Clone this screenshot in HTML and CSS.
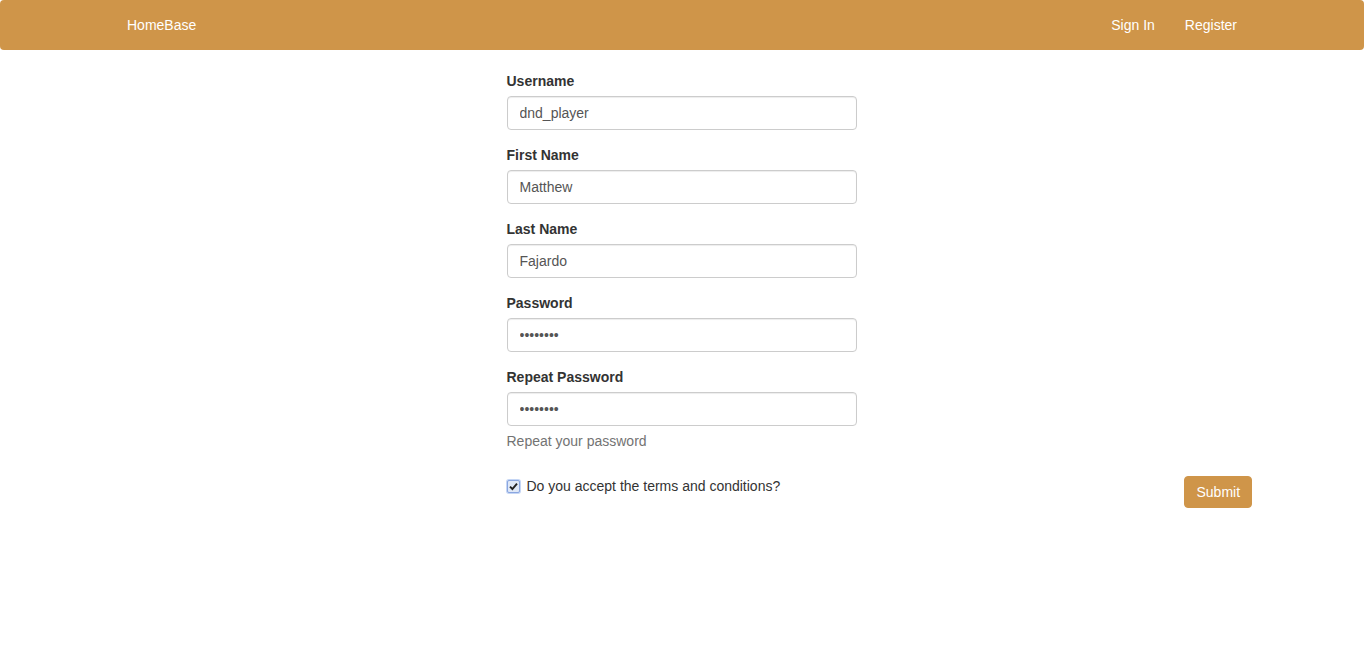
FILE: index.html
```html
<!DOCTYPE html>
<html>
<head>
<meta charset="utf-8">
<title>HomeBase</title>
<link rel="stylesheet" href="styles.css">
</head>
<body>
<nav class="navbar">
  <div class="container nav-inner">
    <a class="brand" href="#">HomeBase</a>
    <ul class="nav-links">
      <li><a href="#">Sign In</a></li>
      <li><a href="#">Register</a></li>
    </ul>
  </div>
</nav>
<div class="container">
  <form class="reg-form">
    <div class="form-col">
      <div class="form-group">
        <label>Username</label>
        <input class="form-control" type="text" value="dnd_player">
      </div>
      <div class="form-group">
        <label>First Name</label>
        <input class="form-control" type="text" value="Matthew">
      </div>
      <div class="form-group">
        <label>Last Name</label>
        <input class="form-control" type="text" value="Fajardo">
      </div>
      <div class="form-group">
        <label>Password</label>
        <input class="form-control" type="password" value="password">
      </div>
      <div class="form-group">
        <label>Repeat Password</label>
        <input class="form-control" type="password" value="password">
        <span class="help-block">Repeat your password</span>
      </div>
    </div>
    <div class="bottom-row">
      <label class="checkbox">
        <span class="check-box">
          <svg width="9" height="9" viewBox="0 0 9 9"><path d="M1 4.6 L3.4 7 L8 1.6" fill="none" stroke="#222" stroke-width="1.9"/></svg>
        </span>
        Do you accept the terms and conditions?
      </label>
      <button class="btn-submit" type="button">Submit</button>
    </div>
  </form>
</div>
</body>
</html>
```
FILE: styles.css
```css
* { box-sizing: border-box; }
html, body { margin: 0; padding: 0; }
body {
  font-family: "Liberation Sans", Arial, Helvetica, sans-serif;
  font-size: 14px;
  line-height: 20px;
  color: #333;
  background: #fff;
}
.container {
  width: 1170px;
  margin: 0 auto;
  padding: 0 15px;
}
.navbar {
  background: #cf9549;
  height: 50px;
  border-radius: 4px;
  margin-right: 1px;
  margin-bottom: 21px;
}
.nav-inner {
  display: flex;
  justify-content: space-between;
  align-items: center;
  height: 50px;
}
.brand {
  color: #fff;
  text-decoration: none;
  padding: 15px;
  line-height: 20px;
}
.nav-links {
  display: flex;
  list-style: none;
  margin: 0;
  padding: 0;
}
.nav-links a {
  display: block;
  color: #fff;
  text-decoration: none;
  padding: 15px;
  line-height: 20px;
}
.form-col {
  width: 350px;
  margin-left: 394px;
}
.form-group { margin-bottom: 15px; }
.form-group label {
  display: block;
  font-weight: bold;
  margin-bottom: 5px;
}
.form-control {
  display: block;
  width: 100%;
  height: 34px;
  padding: 6px 12px;
  font-family: inherit;
  font-size: 14px;
  line-height: 20px;
  color: #555;
  background: #fff;
  border: 1px solid #ccc;
  border-radius: 4px;
  box-shadow: inset 0 1px 1px rgba(0,0,0,.075);
  outline: none;
}
.help-block {
  display: block;
  margin-top: 5px;
  color: #737373;
}
.bottom-row {
  display: flex;
  justify-content: space-between;
  align-items: flex-start;
  padding: 10px 1px 0 394px;
}
.checkbox {
  display: flex;
  align-items: center;
  gap: 7px;
  line-height: 20px;
  font-weight: normal;
}
.check-box {
  width: 13px;
  height: 13px;
  border: 1px solid #8aa6e0;
  border-radius: 2px;
  background: #dfe8f7;
  box-shadow: 0 0 0 1px #c5d6f5;
  display: flex;
  align-items: center;
  justify-content: center;
  margin-top: 1px;
}
.check-box svg { display: block; }
.btn-submit {
  font-family: inherit;
  font-size: 14px;
  line-height: 20px;
  color: #fff;
  background: #cf9549;
  border: 1px solid #cf9549;
  border-radius: 4px;
  padding: 5px 12px;
  width: 68px;
  height: 32px;
  cursor: pointer;
}
```
